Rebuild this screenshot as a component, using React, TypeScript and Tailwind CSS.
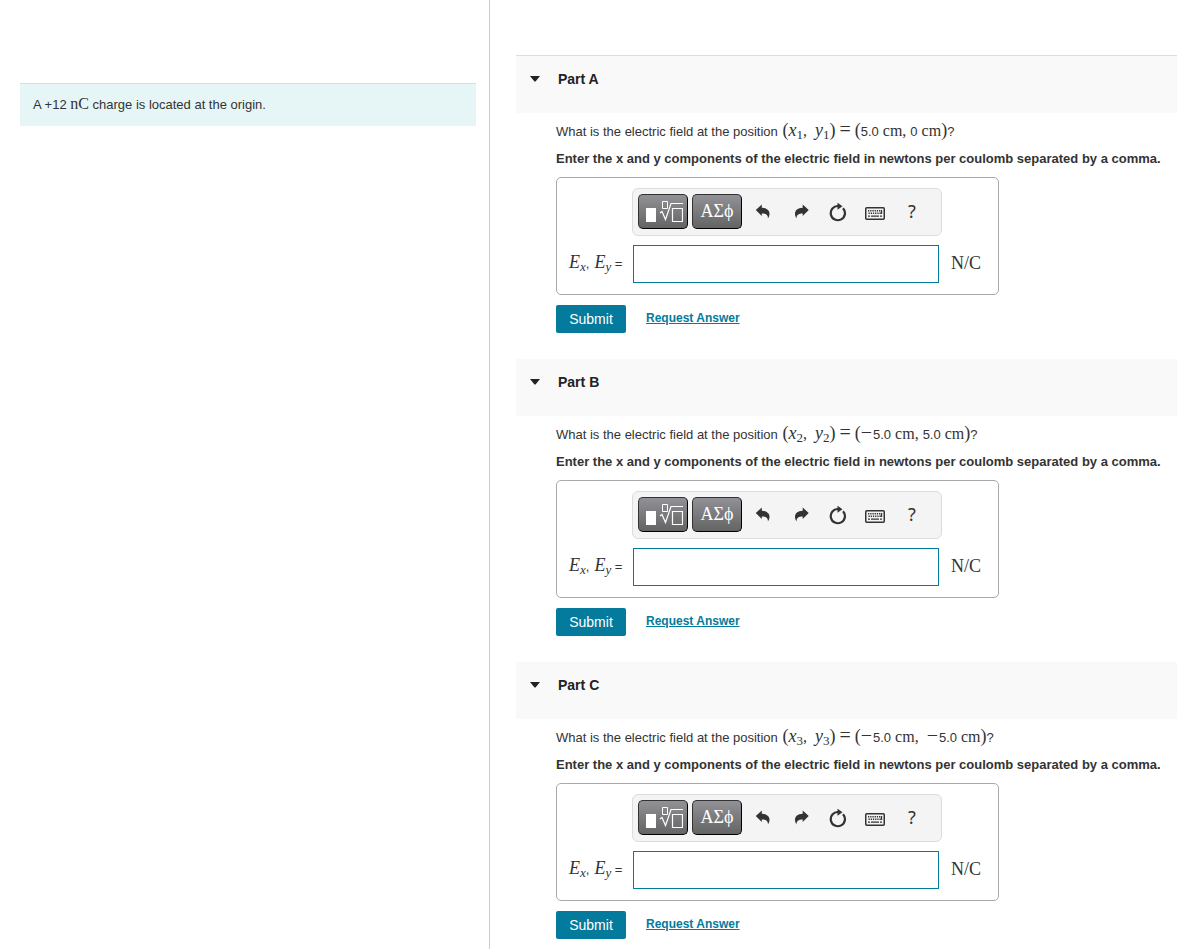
import { ReactNode } from "react";

type Part = {
  id: string;
  index: string;
  coords: [string, string];
};

const parts: Part[] = [
  { id: "A", index: "1", coords: ["5.0", "0"] },
  { id: "B", index: "2", coords: ["−5.0", "5.0"] },
  { id: "C", index: "3", coords: ["−5.0", "−5.0"] },
];

function Serif({ children }: { children: ReactNode }) {
  return <span className="font-['Liberation_Serif',serif] text-[16px]">{children}</span>;
}

function Variable({ name, index }: { name: string; index: ReactNode }) {
  return (
    <span className="font-['Liberation_Serif',serif] text-[18px]">
      <i>{name}</i>
      <sub className="text-[13px]">{index}</sub>
    </span>
  );
}

function Quantity({ value }: { value: string }) {
  const negative = value.startsWith("−");
  return (
    <>
      {negative && <span className="mr-px font-['Liberation_Serif',serif] text-[20px]">−</span>}
      {negative ? value.slice(1) : value}
      <span className="ml-1">
        <Serif>cm</Serif>
      </span>
    </>
  );
}

function Paren({ children }: { children: string }) {
  return <span className="font-['Liberation_Serif',serif] text-[18px]">{children}</span>;
}

function Position({ part }: { part: Part }) {
  const [x, y] = part.coords;
  return (
    <span className="ml-px whitespace-nowrap">
      <Paren>(</Paren>
      <Variable name="x" index={part.index} />
      <span className="mr-2">
        <Serif>,</Serif>
      </span>
      <Variable name="y" index={part.index} />
      <Paren>)</Paren>
      <span className="mx-1 font-['Liberation_Serif',serif] text-[20px]">=</span>
      <Paren>(</Paren>
      <Quantity value={x} />
      <span className={y.startsWith("−") ? "mr-2" : "mr-1"}>
        <Serif>,</Serif>
      </span>
      <Quantity value={y} />
      <Paren>)</Paren>?
    </span>
  );
}

const toolClass =
  "flex h-[35px] w-[50px] items-center justify-center rounded-[5px] border border-[#333] border-r-black border-b-black bg-linear-to-b from-[#929197] to-[#646464] text-white";
const iconClass = "flex h-6 w-6 items-center justify-center text-[#333]";

function Toolbar() {
  return (
    <div
      role="toolbar"
      aria-label="Equation tools"
      className="flex h-12 w-[310px] items-center rounded-md border border-[#dcdcdc] bg-[#f4f4f4] pb-px pl-[5px]"
    >
      <button type="button" aria-label="Templates" className={toolClass}>
        <svg width="40" height="24" viewBox="0 0 40 24" fill="none" stroke="currentColor">
          <rect x="3" y="8" width="10" height="14" fill="currentColor" stroke="none" />
          <path d="M19.500 1.500h5v7h-5z" strokeWidth="1" />
          <path d="M17 13l2-1.500 3.500 8 5.500-16h12" strokeWidth="1.200" />
          <path d="M29.500 8.500h10v13h-10z" strokeWidth="1.200" />
        </svg>
      </button>
      <button
        type="button"
        aria-label="Greek symbols"
        className={`${toolClass} ml-1 font-['Liberation_Serif',serif] text-[18px]`}
      >
        ΑΣϕ
      </button>
      <button type="button" aria-label="Undo" className={`${iconClass} ml-[9px]`}>
        <svg width="16" height="16" viewBox="0 0 16 16" fill="currentColor">
          <path d="M.8 6 6.800.5v3.200C12 4 14.500 6.300 14.500 9.800c0 1.800-.5 3.200-1.600 4.700.3-3.500-1.800-5-6.100-5V12z" />
        </svg>
      </button>
      <button type="button" aria-label="Redo" className={`${iconClass} ml-[14px]`}>
        <svg width="16" height="16" viewBox="0 0 16 16" fill="currentColor">
          <path d="M15.700 6 9.700.5v3.200C4.500 4 2 6.300 2 9.800c0 1.800.5 3.200 1.600 4.700-.3-3.500 1.800-5 6.100-5V12z" />
        </svg>
      </button>
      <button type="button" aria-label="Reset" className={`${iconClass} ml-[13px]`}>
        <svg width="18" height="20" viewBox="0 0 18 20" fill="none">
          <path d="M14 6.200A7.100 7.100 0 1 1 9.200 4" stroke="currentColor" strokeWidth="2.200" />
          <path d="M8.500.8 13.500 4.300 8.500 7.800z" fill="currentColor" />
        </svg>
      </button>
      <button type="button" aria-label="Keyboard shortcuts" className={`${iconClass} ml-[13px]`}>
        <svg className="mt-1" width="20" height="13" viewBox="0 0 20 13" fill="none" stroke="currentColor">
          <rect x=".75" y=".75" width="18.500" height="11.500" rx="1" strokeWidth="1.500" />
          <path d="M3 3.700h14M3.500 6.300h13" strokeWidth="1.400" strokeDasharray="1.300 .9" />
          <path d="M3 9.200h2M6 9.200h8M15 9.200h2M16.500 3v4" strokeWidth="1.300" />
        </svg>
      </button>
      <button
        type="button"
        aria-label="Help"
        className={`${iconClass} ml-[13px] font-['Noto_Sans',sans-serif] text-[18px]`}
      >
        ?
      </button>
    </div>
  );
}

function PartSection({ part }: { part: Part }) {
  const answerId = `answer-${part.id}`;
  return (
    <section>
      <h2 className="h-[57px] bg-[#f9f9f9] pt-3 pl-[14px]">
        <button type="button" aria-expanded="true" className="flex items-center text-[14px] leading-[22px] font-bold text-[#222]">
          <svg className="mr-[18px]" width="10" height="6" viewBox="0 0 10 6" fill="currentColor">
            <path d="M0 0h10L5.500 5.500h-1z" />
          </svg>
          Part {part.id}
        </button>
      </h2>
      <div className="pl-10">
        <p className="mt-[6px] h-5 leading-5">
          What is the electric field at the position <Position part={part} />
        </p>
        <p className="mt-[10px] leading-5 font-bold">
          Enter the x and y components of the electric field in newtons per coulomb separated by a comma.
        </p>
        <div className="mt-2 w-[443px] rounded-[5px] border border-[#aaa] pt-[10px] pb-[11px]">
          <div className="pl-[75px]">
            <Toolbar />
          </div>
          <div className="mt-[9px] flex items-center">
            <label htmlFor={answerId} className="w-[76px] pb-[2px] pl-3 leading-5 whitespace-nowrap">
              <Variable name="E" index={<i>x</i>} />
              <span className="mr-[5px]">,</span>
              <Variable name="E" index={<i>y</i>} /> =
            </label>
            <input
              id={answerId}
              type="text"
              className="h-[38px] w-[306px] border border-[#047a9c] bg-white px-2 text-[16px] outline-none"
            />
            <span className="ml-3 pb-[2px] font-['Liberation_Serif',serif] text-[18px] leading-5">N/C</span>
          </div>
        </div>
        <div className="mt-[10px] flex items-center">
          <button type="button" className="h-7 w-[70px] rounded-[2px] bg-[#047a9c] text-[14px] text-white">
            Submit
          </button>
          <a href="#request-answer" className="mb-[2px] ml-5 text-[12px] font-bold text-[#047a9c] underline">
            Request Answer
          </a>
        </div>
      </div>
    </section>
  );
}

export default function App() {
  return (
    <div className="flex min-h-screen bg-white font-['Liberation_Sans',Arial,sans-serif] text-[13px] text-[#333]">
      <aside className="w-[490px] shrink-0 border-r border-[#ccc] pt-[83px] pr-[13px] pl-5">
        <p className="h-[43px] border-t border-[#d6dfdf] bg-[#e6f6f6] pt-[10px] pl-[13px] leading-5">
          A +12 <Serif>nC</Serif> charge is located at the origin.
        </p>
      </aside>
      <main className="min-w-0 grow pt-[55px] pl-[26px]">
        <div className="flex flex-col gap-[26px] border-t border-[#ddd]">
          {parts.map((part) => (
            <PartSection key={part.id} part={part} />
          ))}
        </div>
      </main>
    </div>
  );
}
